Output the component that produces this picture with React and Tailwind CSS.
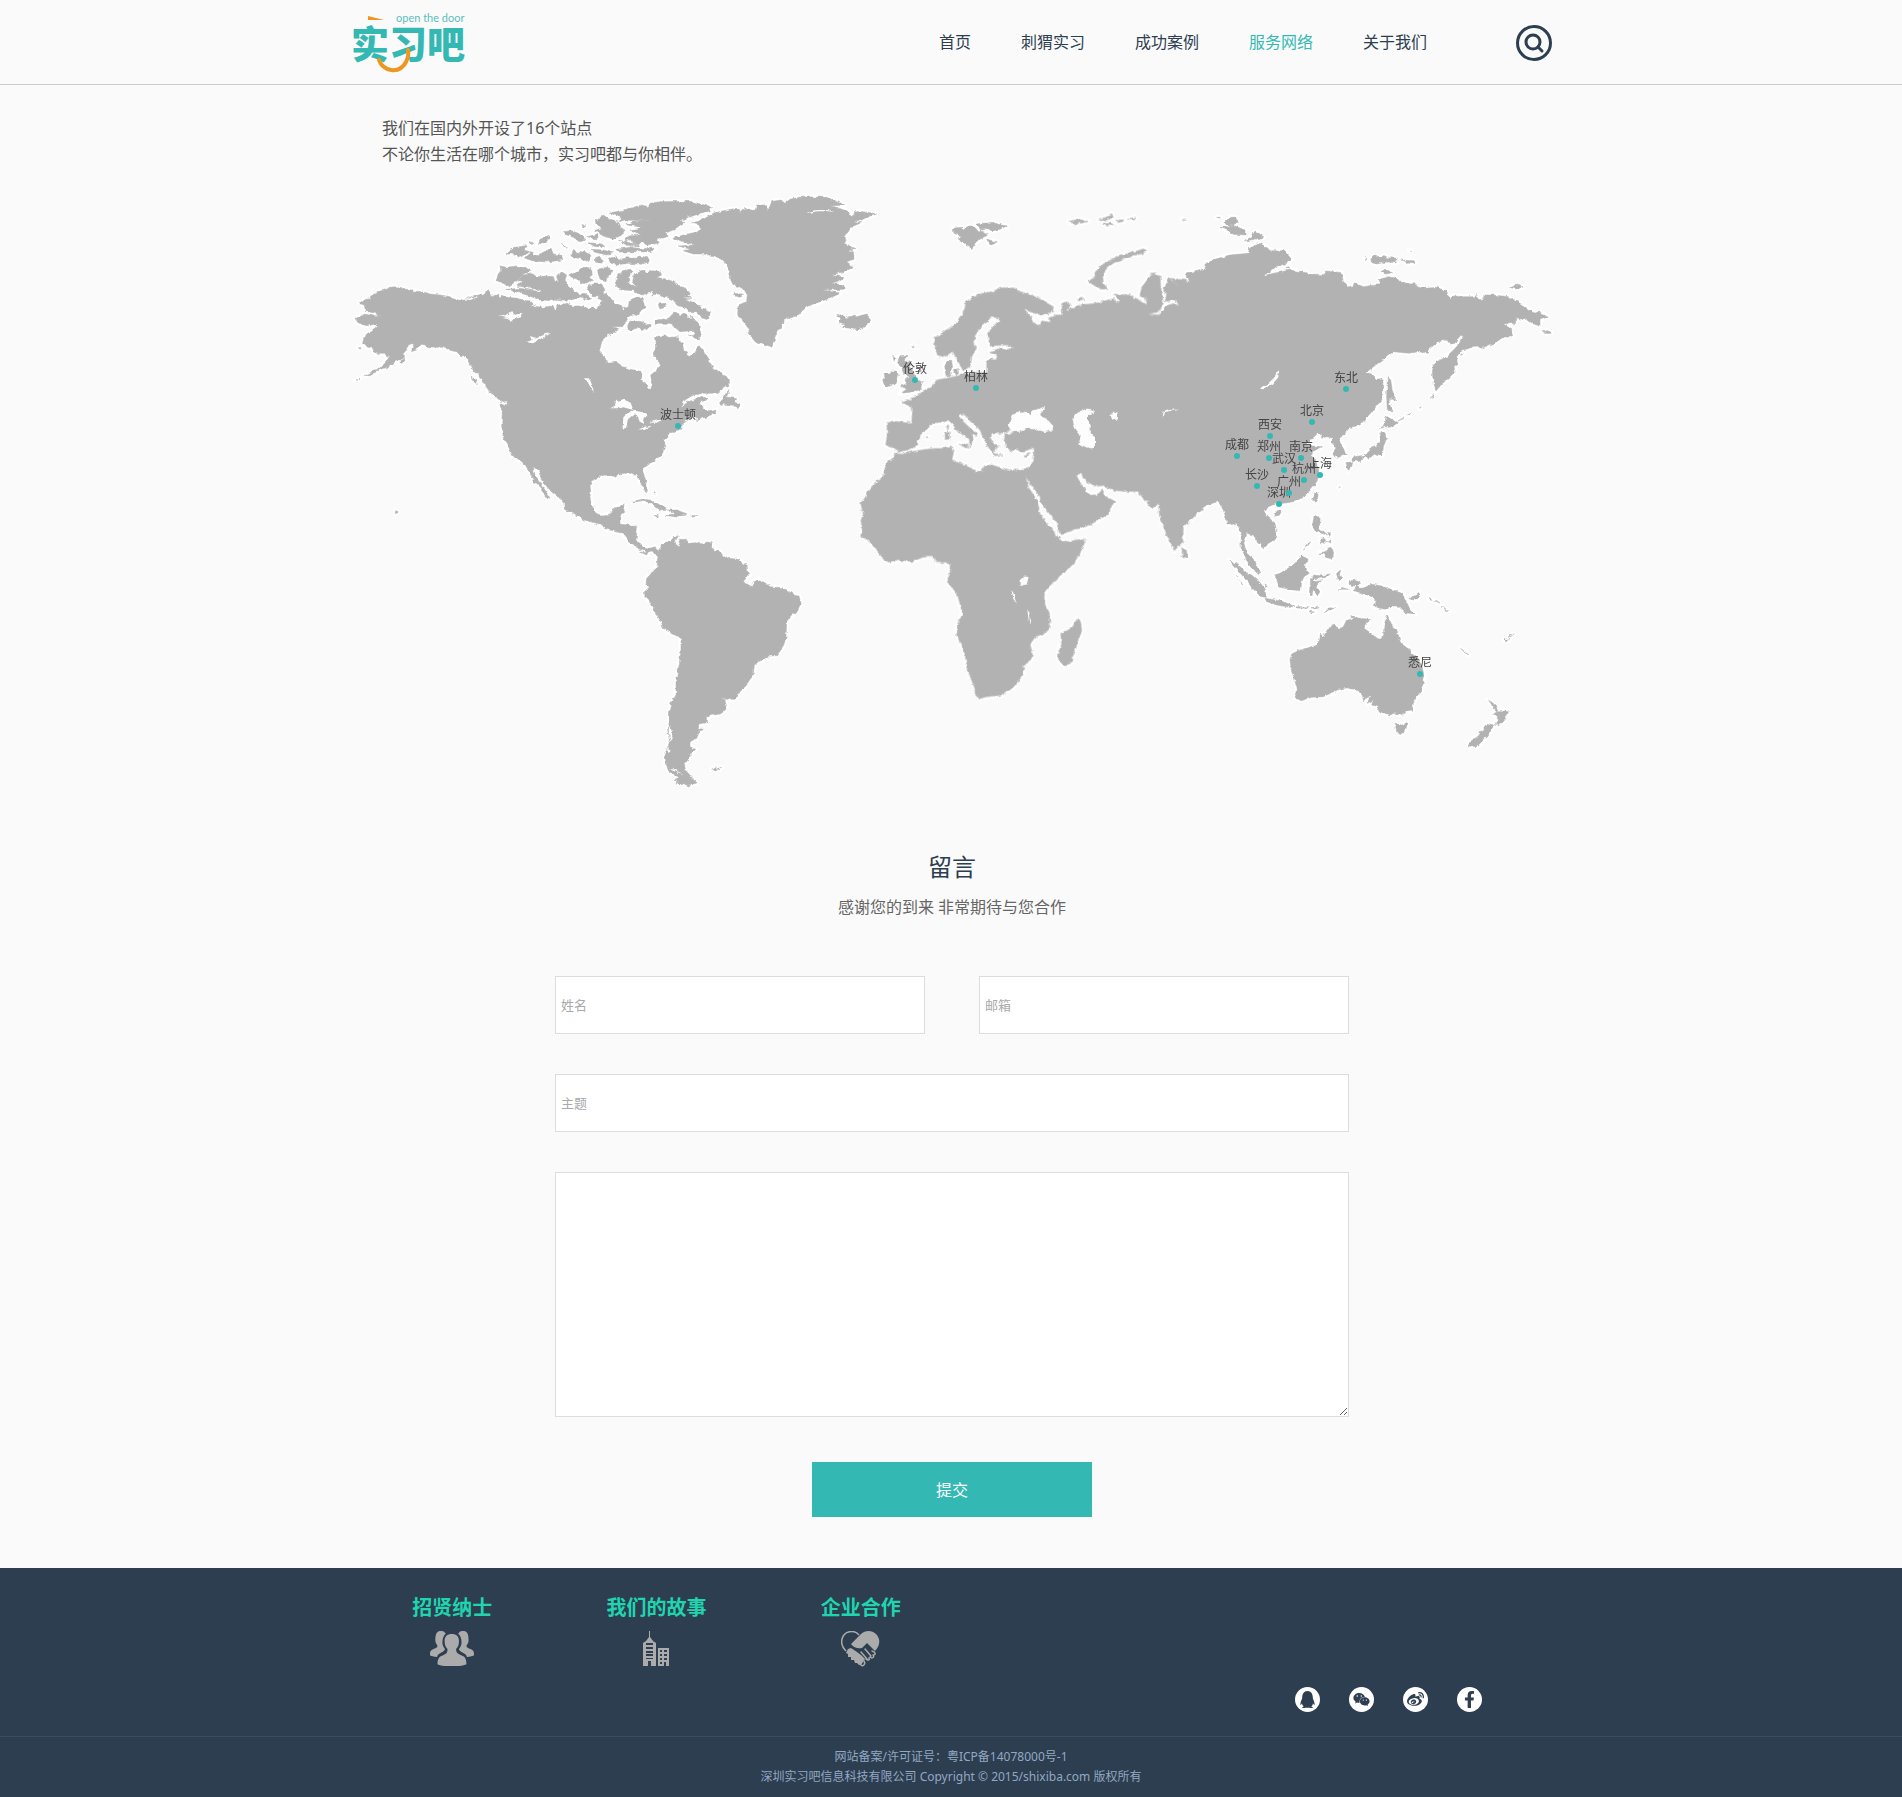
import { FaQq, FaWeixin, FaWeibo, FaFacebookF } from "react-icons/fa";

const NAV = [
  { label: "首页" },
  { label: "刺猬实习" },
  { label: "成功案例" },
  { label: "服务网络", active: true },
  { label: "关于我们" },
];

const MAP = { x: 352, y: 187, width: 1200, height: 610 };

const CITIES = [
  { name: "波士顿", x: 678, y: 426 },
  { name: "伦敦", x: 915, y: 380 },
  { name: "柏林", x: 976, y: 388 },
  { name: "东北", x: 1346, y: 389 },
  { name: "北京", x: 1312, y: 422 },
  { name: "西安", x: 1270, y: 436 },
  { name: "成都", x: 1237, y: 456 },
  { name: "郑州", x: 1269, y: 458 },
  { name: "南京", x: 1301, y: 458 },
  { name: "武汉", x: 1284, y: 470 },
  { name: "杭州", x: 1304, y: 480 },
  { name: "上海", x: 1320, y: 475 },
  { name: "长沙", x: 1257, y: 486 },
  { name: "深圳", x: 1279, y: 504 },
  { name: "广州", x: 1289, y: 493 },
  { name: "悉尼", x: 1420, y: 674 },
];

/* Each region is drawn on its own grid and placed on the map by a transform. */
const REGIONS = [
  {
    id: "north-america",
    transform: "translate(340 180) scale(0.33333)",
    land: [
      "M45 415L75 402 100 408 120 405 100 398 80 395 75 382 72 375 58 370 75 360 90 355 98 343 110 337 130 330 150 322 165 320 175 326 200 325 210 332 245 335 270 342 300 345 330 350 345 358 365 362 385 353 400 348 430 342 445 332 455 350 475 342 478 354 485 346 500 352 530 355 560 362 570 362 590 372 572 378 610 382 640 378 645 392 652 388 650 376 680 370 700 378 720 378 745 385 760 380 768 386 775 380 785 365 775 352 780 345 790 340 810 352 825 370 840 375 850 388 865 380 868 362 885 352 905 352 912 372 915 385 900 395 890 410 880 405 860 410 862 418 850 440 815 440 840 448 805 465 785 485 778 515 795 530 800 550 830 547 850 560 870 568 903 574 905 600 920 612 925 625 932 630 936 615 932 585 945 575 958 560 958 545 940 525 950 505 947 475 955 468 975 468 990 472 1012 470 1015 478 1030 490 1035 515 1050 530 1065 518 1075 500 1080 498 1090 510 1095 525 1103 530 1110 545 1115 560 1130 572 1140 578 1160 590 1168 598 1168 615 1150 625 1130 640 1090 640 1060 645 1035 660 1022 683 1045 665 1075 655 1090 652 1105 658 1085 662 1078 672 1090 680 1088 690 1110 695 1130 690 1125 700 1100 710 1085 716 1070 722 1072 710 1060 712 1040 722 1025 735 1022 748 990 758 985 768 972 780 975 792 968 820 960 828 940 845 925 852 912 862 908 880 920 905 922 935 915 932 900 905 893 885 880 885 870 880 855 880 832 882 828 892 810 885 785 886 755 902 750 915 752 935 750 950 755 980 768 1000 790 1008 815 1000 822 980 855 975 850 995 840 1010 840 1032 860 1035 885 1036 892 1045 888 1080 895 1090 915 1102 930 1105 945 1100 955 1110 950 1130 935 1110 920 1117 915 1112 890 1105 880 1092 868 1090 868 1085 850 1062 820 1052 800 1048 780 1033 770 1030 735 1020 680 990 672 985 672 970 650 945 625 925 605 900 595 870 580 865 585 885 600 905 612 925 620 938 630 955 620 952 605 935 605 925 590 910 578 905 582 898 575 890 565 870 550 845 520 830 505 800 490 775 485 740 487 690 478 675 485 672 500 680 498 665 470 650 445 630 430 605 418 592 415 580 405 578 395 560 385 545 378 530 365 530 350 515 330 510 310 502 290 502 262 500 245 492 235 505 215 512 222 490 205 495 200 510 190 520 190 535 165 545 150 558 120 570 95 583 75 587 100 573 110 572 135 550 150 527 140 530 135 520 105 520 98 505 78 500 68 488 75 465 95 455 112 440 110 432 80 437 55 430Z",
      "M480 258L500 262 530 258 560 265 572 272 555 282 540 290 520 310 505 318 485 308 468 302 475 285 482 270Z",
      "M530 300L545 288 575 280 590 290 615 288 640 290 645 305 655 305 650 290 665 275 680 285 675 300 690 325 715 340 740 350 715 352 690 362 650 358 640 362 600 360 560 345 500 328 540 325 600 335 608 332 560 322 530 318 550 308Z",
      "M685 288L720 270 730 262 755 264 756 280 750 290 758 300 740 312 725 308 712 298Z",
      "M772 268L800 262 820 268 812 285 800 292 798 305 780 300Z",
      "M738 325L765 308 785 312 795 330 785 350 760 350Z",
      "M712 345L735 340 755 355 745 362Z",
      "M828 295L840 278 870 268 880 272 865 290 868 312 890 320 878 308 882 285 910 270 920 280 930 272 960 274 965 285 950 292 990 300 1020 320 1035 322 1050 345 1035 345 1055 355 1030 355 1070 370 1080 380 1112 395 1105 420 1090 415 1065 395 1045 395 1040 385 1010 375 1000 360 975 350 955 342 935 345 940 335 905 345 880 332 850 330 830 320Z",
      "M945 430L950 420 985 415 1005 395 1020 405 1035 400 1055 420 1050 405 1080 435 1082 450 1078 480 1060 470 1045 465 1065 462 1055 452 1020 455 990 430Z",
      "M862 440L870 420 905 425 932 438 918 450 890 445 870 452Z",
      "M955 372L975 370 975 382 960 387Z",
      "M820 412L850 418 845 424Z",
      "M785 440L820 444 810 450Z",
      "M805 235L830 230 835 240 860 233 890 235 900 228 925 234 928 245 905 253 860 250 835 255 810 250Z",
      "M765 235L780 232 790 240 785 250 768 246Z",
      "M555 235L575 215 585 228 600 222 632 205 640 222 665 225 668 240 620 246 580 243Z",
      "M498 222L525 202 540 200 560 196 550 210 570 215 550 228 532 234 530 222Z",
      "M595 190L600 178 630 168 622 182 605 192Z",
      "M570 185L582 188 575 194Z",
      "M670 155L695 152 715 160 730 165 735 182 720 185 700 172 675 163Z",
      "M725 137L738 138 732 142Z",
      "M695 225L700 212 718 218 730 212 750 220 748 240 735 245 722 236 700 232Z",
      "M668 190L680 205 668 196Z",
      "M740 170L770 163 775 172 765 180Z",
      "M745 188L785 192 795 200 765 200Z",
      "M755 208L790 210 820 218 800 225 770 218Z",
      "M765 125L790 105 808 118 830 122 838 140 855 150 845 165 820 178 790 168 762 152 785 145Z",
      "M808 100L840 92 870 85 905 75 925 80 930 70 960 65 1050 64 1115 80 1110 92 1060 105 1080 100 1020 122 1035 125 1000 150 975 160 985 168 950 180 955 190 920 195 905 185 895 195 880 190 870 178 850 185 865 168 900 165 870 150 910 142 860 135 880 125 940 120 900 122 850 120 835 125 842 112Z",
      "M835 180L870 188 900 198 860 196Z",
      "M830 208L880 200 900 206 945 205 930 215 840 216Z",
      "M1168 628L1160 650 1190 656 1185 666 1200 672 1198 685 1180 676 1140 672 1150 655Z",
      "M1095 690L1085 700 1100 695Z",
      "M878 965L905 958 930 960 955 972 980 988 960 990 945 978 930 968 905 963Z",
      "M985 990L1010 990 1042 1002 1015 1006 1010 1011 975 1006 1005 1002Z",
      "M942 1006L960 1008 952 1012Z",
      "M1055 1006L1072 1008 1060 1011Z",
      "M940 935L946 942 942 942Z",
      "M165 990L175 996 167 1002Z",
      "M445 635L470 640 498 665 490 668 465 650Z",
      "M178 545L195 535 198 542 185 550Z",
      "M48 600L60 594 54 600Z",
      "M55 503L63 503 60 508Z",
      "M393 588L408 600 412 614 400 605Z",
    ],
    water: [
      "M475 407L500 405 515 395 525 404 548 400 540 412 520 418 512 426 505 415 485 410Z",
      "M558 487L575 480 570 468 590 475 615 462 634 460 605 475 580 490Z",
      "M735 595L748 595 755 612 762 636 755 628 745 610Z",
      "M808 685L825 675 828 664 850 658 872 668 880 690 850 682 830 685Z",
      "M862 700L850 712 848 745 858 745 864 718 885 700 895 722 912 732 910 712 926 712 915 698 885 692Z",
      "M892 748L915 740 938 737 910 750Z",
      "M928 728L950 720 965 720 950 728Z",
      "M365 358L420 350 390 360Z",
      "M570 362L600 370 660 362 660 368 610 376 590 376Z",
    ],
  },
  {
    id: "greenland",
    transform: "translate(640 180) scale(0.33333)",
    land: [
      "M97 175L130 165 165 158 180 148 178 135 155 130 190 118 220 100 250 92 290 85 300 98 315 85 345 92 350 75 375 75 385 90 395 65 420 60 435 70 450 58 475 52 510 51 560 52 600 68 615 75 570 78 590 82 625 95 632 108 650 95 670 95 710 102 685 112 665 120 640 124 665 128 635 140 625 155 612 170 618 182 612 190 645 205 620 215 640 215 642 238 620 245 640 260 610 275 575 285 608 290 605 300 575 310 612 315 612 328 550 330 600 340 570 355 520 372 500 380 475 405 450 415 430 418 425 445 412 450 405 475 395 503 375 492 345 485 330 465 325 445 310 425 293 405 295 375 320 365 322 345 310 325 280 315 272 300 268 270 255 245 225 228 190 222 160 222 130 212 150 208 115 198 165 195Z",
      "M280 340L308 342 300 352 284 348Z",
      "M590 408L610 402 618 418 625 410 640 408 650 410 680 402 685 412 692 420 680 438 650 450 625 444 608 443 612 432 595 425 605 418Z",
      "M940 145L965 142 970 150 985 138 1000 138 1008 150 1030 155 1045 165 1030 172 1020 178 1005 190 995 210 988 198 975 192 970 186 955 178 962 168 942 160Z",
      "M1010 132L1060 127 1070 132 1100 138 1080 148 1060 152 1040 148 1025 150Z",
      "M1040 178L1072 186 1050 194Z",
      "M728 600L735 590 732 582 750 582 755 574 770 573 775 590 768 608 750 618 735 622Z",
      "M778 527L800 526 795 545 812 542 808 560 820 575 826 592 832 600 848 605 842 622 845 628 820 635 780 641 800 628 782 620 800 610 795 600 808 590 790 580 785 562 773 552Z",
      "M760 530L768 533 762 545Z",
      "M815 497L820 497 818 500Z",
      "M914 555L935 540 938 560 930 575 932 590 918 590Z",
      "M940 572L955 565 955 582 945 585Z",
      "M960 582L968 582 966 590Z",
    ],
    water: ["M500 97L530 90 560 90 585 95 560 94 530 94 510 99Z"],
  },
  {
    id: "europe-africa",
    transform: "translate(840 180) scale(0.33333 0.35714)",
    land: [
      "M283 440L300 436 310 425 345 405 355 390 370 370 378 350 372 345 400 325 420 320 440 315 462 312 480 300 495 305 520 302 540 312 558 318 590 328 640 355 638 368 620 375 600 378 575 370 550 362 575 385 582 400 600 410 605 395 630 398 632 392 622 388 650 378 668 378 665 345 675 342 692 350 680 365 700 358 720 350 770 345 820 332 830 345 838 335 820 320 870 322 905 340 922 350 918 335 900 325 905 300 935 265 960 268 962 300 970 345 958 368 925 375 955 378 985 350 1005 346 1018 358 1008 335 975 340 980 320 970 310 975 300 985 275 1020 300 990 275 1030 280 1055 288 1040 275 1040 262 1095 252 1100 230L1100 908 1060 945 1030 970 1028 1015 1020 1020 1003 1038 985 1005 975 980 960 950 958 935 955 905 940 917 920 905 930 900 915 900 905 885 890 872 850 872 820 868 800 862 790 855 770 858 740 845 722 822 708 825 715 838 725 855 745 882 770 882 788 868 795 885 825 900 815 912 805 935 770 955 745 968 700 980 660 993 650 960 625 930 610 910 590 875 570 850 552 822 562 812 570 808 575 800 583 755 575 752 545 762 530 754 515 760 500 748 492 730 495 712 520 708 515 700 490 708 455 712 452 725 470 745 480 745 465 752 462 768 450 755 440 742 430 722 420 700 390 675 375 655 358 655 360 668 385 690 410 712 410 718 395 712 400 730 390 748 388 725 350 700 335 680 325 672 310 678 280 680 262 695 240 715 230 730 235 740 215 752 180 762 165 752 142 745 137 740 142 715 140 680 160 675 200 680 215 678 218 640 205 632 185 622 200 615 215 618 215 608 235 603 250 590 275 580 290 560 320 555 345 550 380 542 400 538 440 540 440 510 450 500 470 505 465 485 450 480 480 472 500 475 525 468 495 462 450 465 442 430 470 400 482 395 475 385 450 385 445 395 430 405 405 435 400 455 410 470 395 495 392 520 370 535 350 500 338 480 325 488 310 495 292 490 285 465Z",
      "M165 765L185 768 210 762 250 755 280 752 300 752 335 748 342 758 335 782 355 792 380 798 405 815 420 818 435 800 450 798 480 805 510 812 530 812 550 810 578 800L555 824 565 860 590 895 600 935 625 965 655 1000 668 1015 700 1010 735 1003 735 1015 720 1045 700 1075 660 1108 620 1145 612 1165 615 1190 628 1212 630 1250 615 1268 585 1280 570 1300 577 1325 573 1345 550 1360 550 1380 540 1395 520 1420 485 1443 440 1447 420 1452 405 1442 405 1425 380 1365 375 1325 350 1275 352 1245 368 1215 358 1180 352 1160 335 1140 322 1125 330 1100 330 1080 322 1070 290 1072 285 1060 270 1055 250 1056 215 1068 180 1065 150 1072 130 1062 110 1035 80 1005 65 998 67 970 62 955 70 935 62 905 75 890 85 870 105 848 130 830 138 795 160 780Z",
      "M712 1228L722 1240 725 1262 715 1285 705 1320 690 1355 670 1358 656 1345 655 1325 665 1300 662 1270 695 1255Z",
      "M745 285L765 270 765 258 790 235 830 215 860 208 910 193 922 198 900 208 870 212 825 230 800 245 788 270 790 290 805 306 780 305Z",
      "M685 117L715 110 745 116 710 123Z",
      "M775 110L800 104 815 94 820 105 800 112Z",
      "M790 122L815 121 820 126 798 129Z",
      "M828 115L845 111 853 115 835 119Z",
      "M862 110L888 104 880 112Z",
      "M1025 109L1036 110 1028 112Z",
      "M712 332L725 328 732 333 715 338Z",
      "M930 262L945 260 945 266Z",
      "M355 738L385 740 380 752Z",
      "M315 708L328 706 328 726 316 726Z",
      "M320 688L326 686 325 702 318 698Z",
      "M460 766L488 770 465 772Z",
      "M550 772L572 765 562 774Z",
      "M258 720L264 719 262 724Z",
      "M1025 1025L1042 1042 1045 1055 1028 1058Z",
    ],
    water: [
      "M505 690L515 662 530 650 540 645 545 652 560 648 568 658 580 645 615 635 612 645 600 655 620 670 640 685 638 700 615 706 590 698 560 697 540 705 515 703Z",
      "M697 668L712 652 740 640 760 642 762 655 745 658 742 670 752 690 752 710 765 720 765 750 740 752 715 740 722 715 705 695Z",
      "M812 655L820 652 832 650 834 670 822 672 815 670Z",
      "M968 660L972 645 990 641 1022 645 990 646 975 650 972 661Z",
      "M542 1120L555 1110 566 1112 560 1132 542 1137Z",
      "M514 1148L520 1155 530 1188 522 1178Z",
      "M562 1205L568 1210 568 1230 573 1245 567 1238Z",
      "M405 505L418 498 415 512Z",
    ],
  },
  {
    id: "asia-east",
    transform: "translate(1180 180) scale(0.33333)",
    land: [
      "M0 300L35 310 20 295 20 278 50 275 75 270 80 250 105 238 150 225 205 220 208 205 240 190 262 203 270 212 315 212 335 235 320 250 290 262 250 288 280 280 330 270 380 278 390 285 430 287 440 273 485 278 490 305 515 325 525 310 550 320 585 315 600 315 598 298 625 290 650 295 665 310 700 308 715 322 740 325 770 322 800 332 803 346 815 358 818 348 850 350 885 350 888 343 905 362 912 345 940 345 985 350 1020 370 1055 395 1062 400 1078 396 1105 410 1080 420 1080 438 1060 432 1040 418 1020 420 1010 412 1005 430 970 432 990 445 998 468 975 468 950 485 905 505 890 498 870 505 845 510 830 530 832 552 822 560 825 575 800 600 785 612 768 633 760 600 757 580 760 555 770 545 800 530 830 500 850 468 838 470 825 490 810 492 800 480 775 485 750 505 745 520 715 515 690 520 640 515 600 545 555 580 575 585 590 598 605 595 612 610 605 660 580 690 540 735 500 745 495 762 475 775 490 805 498 825 470 835 460 820 468 800 452 790 460 775 440 770 425 775 418 762 390 785 370 785 395 798 425 800 400 812 395 825 408 845 415 865 418 890 410 905 395 925 375 950 340 965 300 972 290 970 265 980 255 995 258 1005 285 1030 290 1055 285 1080 265 1090 250 1107 245 1095 235 1088 220 1065 200 1060 192 1090 200 1120 225 1145 238 1180 215 1165 200 1140 182 1100 185 1065 170 1030 145 1035 130 990 115 965 95 970 70 980 40 1010 10 1038 0 1045Z",
      "M130 130L150 112 168 112 175 125 155 138Z",
      "M120 142L165 138 195 150 195 165 160 163 145 152Z",
      "M193 183L215 170 225 153 240 162 252 172 225 178Z",
      "M110 112L122 112 116 114Z",
      "M318 262L330 260 325 266Z",
      "M572 238L585 225 600 232 610 226 625 233 652 235 648 248 620 246 590 252 576 248Z",
      "M663 240L700 242 708 247 690 251Z",
      "M603 274L620 271 638 279 615 282Z",
      "M556 233L561 236 558 240Z",
      "M687 212L695 211 690 214Z",
      "M992 323L1008 315 1030 321 1010 327Z",
      "M1088 455L1103 452 1116 458 1100 461Z",
      "M842 523L850 520 845 526Z",
      "M622 590L632 600 637 630 647 662 632 655 628 670 636 692 622 692 620 650Z",
      "M618 708L635 718 655 728 630 742 615 740 602 745 615 730Z",
      "M603 755L612 755 620 775 610 800 606 828 580 825 565 838 560 825 540 838 515 842 520 830 555 825 572 810 575 800 595 795Z",
      "M497 848L515 845 512 862 505 872Z",
      "M530 838L550 836 540 845Z",
      "M655 722L672 712 670 716Z",
      "M680 706L694 700 690 704Z",
      "M718 686L724 683 720 688Z",
      "M750 655L764 642 760 648Z",
    ],
    water: [
      "M238 625L265 610 285 590 290 574 296 570 295 592 278 612 255 625Z",
      "M412 762L390 782 400 785 425 772 420 762Z",
    ],
  },
  {
    id: "oceania",
    transform: "translate(1180 360) scale(0.33333)",
    land: [
      "M408 398L415 400 412 415 405 428 398 418Z",
      "M283 460L290 452 305 452 298 466 288 468Z",
      "M402 470L420 470 420 490 415 508 430 515 440 525 425 520 405 512 397 498Z",
      "M443 518L453 522 447 530Z",
      "M420 535L430 532 440 545 425 552Z",
      "M442 545L452 540 452 550Z",
      "M416 580L435 575 442 570 455 560 461 580 455 598 440 592 432 582Z",
      "M370 570L385 550 392 546 380 562Z",
      "M285 645L300 640 320 628 345 610 365 586 388 600 375 612 375 625 388 640 372 650 365 665 362 692 340 690 318 685 298 682Z",
      "M148 600L172 612 200 638 215 645 238 665 256 688 256 712 240 708 215 682 190 650Z",
      "M192 560L200 580 225 602 230 625 240 640 222 632 205 612 195 590Z",
      "M255 715L300 722 345 738 330 742 290 735 260 725Z",
      "M350 740L385 740 382 745 352 744Z",
      "M392 742L418 743 405 747Z",
      "M388 753L404 756 398 758Z",
      "M432 757L445 745 468 740 450 752Z",
      "M392 655L405 645 425 648 448 641 435 653 402 656 402 665 425 662 408 678 422 698 412 708 400 688 396 708 388 700Z",
      "M470 640L482 630 478 645 485 652 475 662Z",
      "M478 688L505 688 490 684Z",
      "M505 662L530 660 542 670 530 675 542 685 555 683 575 672 605 678 640 690 665 700 678 722 690 748 705 762 675 758 655 738 635 738 620 748 600 745 580 738 592 725 575 710 548 700 520 692 530 680 508 672Z",
      "M683 712L700 712 718 700 715 714 700 720Z",
      "M745 710L757 722 750 720Z",
      "M765 722L778 730 772 728Z",
      "M785 735L806 756 798 752Z",
      "M622 765L630 782 638 800 650 808 655 825 662 850 690 870 700 885 712 892 725 915 733 950 725 990 710 1010 700 1030 697 1053 680 1055 662 1065 645 1060 630 1065 600 1055 590 1040 575 1035 580 1020 562 1030 572 1005 550 1022 548 1008 535 992 500 983 480 988 460 995 430 1010 395 1012 365 1022 345 1015 352 990 345 960 335 935 330 900 335 882 360 870 410 855 418 840 422 822 430 832 440 812 450 800 465 795 475 808 490 800 500 780 518 776 512 770 540 775 568 778 552 805 580 825 600 836 610 825 612 795Z",
      "M645 1090L665 1095 681 1090 678 1110 660 1124 650 1112Z",
      "M926 1018L945 1035 955 1052 970 1052 985 1055 980 1070 965 1088 955 1098 945 1092 955 1075 940 1062 952 1055 938 1040Z",
      "M920 1090L942 1095 925 1125 905 1145 890 1160 865 1158 870 1145 895 1128Z",
      "M842 865L867 885 855 878Z",
      "M972 838L990 836 980 843Z",
      "M985 830L1002 822 992 830Z",
      "M475 383L480 380 477 385Z",
      "M252 672L262 678 256 684Z",
      "M168 642L174 650 170 648Z",
      "M182 665L190 672 185 670Z",
    ],
    water: [],
  },
  {
    id: "south-america",
    transform: "translate(600 500) scale(0.33333)",
    land: [
      "M120 155L140 158 142 148 160 142 172 158 180 145 190 130 215 120 222 110 235 108 225 125 232 140 240 135 235 118 248 118 262 122 265 130 285 128 310 132 320 126 335 128 330 140 345 150 360 155 370 168 385 175 415 178 438 195 440 210 450 222 438 232 430 245 452 258 462 242 475 240 495 248 510 260 545 263 565 272 580 285 597 288 603 310 590 335 572 350 560 368 558 410 550 440 530 467 510 468 495 478 475 485 463 495 460 525 445 545 440 555 420 575 405 598 380 598 362 592 375 600 380 620 372 635 355 643 323 648 322 668 295 672 295 685 310 688 300 692 290 715 270 725 270 740 287 748 268 765 265 780 252 790 258 815 275 835 292 848 265 858 248 850 235 852 225 838 238 832 215 820 205 812 198 790 195 760 205 740 208 720 203 690 210 678 208 640 212 610 228 585 228 545 238 490 243 450 243 418 230 408 190 385 180 360 165 335 150 305 135 290 133 275 148 262 138 250 140 235 150 225 160 210 172 200 172 172 160 152 145 155 140 165 125 158Z",
      "M335 808L348 800 350 810Z",
      "M352 806L365 802 358 810Z",
    ],
    water: [
      "M438 234L446 230 440 240 432 246Z",
      "M452 256L462 244 466 246 455 260Z",
      "M210 680L218 700 212 730 208 712Z",
      "M200 745L212 752 206 760Z",
      "M205 800L235 815 250 822 225 815Z",
    ],
  },
];

function Land() {
  return REGIONS.map((r) => (
    <g key={r.id} transform={r.transform}>
      {r.land.map((d) => (
        <path key={d} d={d} />
      ))}
    </g>
  ));
}

function WorldMap() {
  return (
    <svg
      viewBox={`${MAP.x} ${MAP.y} ${MAP.width} ${MAP.height}`}
      className="block w-full overflow-visible"
      role="img"
      aria-label="世界地图"
    >
      <defs>
        <filter id="coast" x="-2%" y="-2%" width="104%" height="104%">
          <feTurbulence type="fractalNoise" baseFrequency="0.22" numOctaves="2" seed="4" result="n" />
          <feDisplacementMap
            in="SourceGraphic"
            in2="n"
            scale="4"
            xChannelSelector="R"
            yChannelSelector="G"
          />
        </filter>
      </defs>
      <g fill="#fff" stroke="#fff" strokeWidth="14" strokeLinejoin="round">
        <Land />
      </g>
      <g filter="url(#coast)">
        <g fill="#b2b2b2" stroke="#b2b2b2" strokeWidth="1.5">
          <Land />
        </g>
        <g fill="#fdfdfd">
          {REGIONS.map((r) => (
            <g key={r.id} transform={r.transform}>
              {r.water.map((d) => (
                <path key={d} d={d} />
              ))}
            </g>
          ))}
        </g>
      </g>
    </svg>
  );
}

function CityPin({ name, x, y }) {
  return (
    <li
      className="absolute flex h-[26px] w-10 -translate-x-1/2 flex-col items-center"
      style={{
        left: `${((x - MAP.x) / MAP.width) * 100}%`,
        top: `calc(${((y - MAP.y) / MAP.height) * 100}% - 20px)`,
      }}
    >
      <span className="whitespace-nowrap text-xs leading-[17px] text-[#444]">{name}</span>
      <span className="size-1.5 shrink-0 rounded-full bg-[#34b8b4]" />
    </li>
  );
}

function Logo() {
  return (
    <svg viewBox="1 -4 113 68" className="block h-[68px] w-[113px]" role="img" aria-label="实习吧">
      <path d="M17 4L33 8 17 8Z" fill="#ee9720" />
      <text x="45" y="10" fontSize="11" fontFamily="Lato, sans-serif" fill="#5cc0bd">
        open the door
      </text>
      <text
        x="0"
        y="46"
        fontSize="38"
        fontFamily="'Noto Sans CJK SC', sans-serif"
        fontWeight="900"
        fill="#34b8b4"
      >
        实习吧
      </text>
      <path
        d="M28 48C32 59 48 63 55 50C57 46 58 43 57 38"
        fill="none"
        stroke="#ee9720"
        strokeWidth="4"
        strokeLinecap="round"
      />
    </svg>
  );
}

function SearchIcon() {
  return (
    <svg viewBox="0 0 36 36" className="block size-9" fill="none" stroke="#2d3e50" aria-hidden="true">
      <circle cx="18" cy="18" r="16.5" strokeWidth="3" />
      <circle cx="17" cy="17" r="7" strokeWidth="3" />
      <path d="M22 22L26 26" strokeWidth="3" strokeLinecap="round" />
    </svg>
  );
}

function PeopleIcon() {
  return (
    <svg viewBox="0 0 44 35" className="block h-[35px] w-11" fill="#ababab" aria-hidden="true">
      <g transform="scale(0.35714 0.33333) translate(-140 -212)">
        <path d="M168 212C175 211 181 214 184 220C177 226 174 236 175 250C176 256 178 260 182 266C181 273 172 276 166 280C162 283 160 286 160 290C150 289 144 288 140 285C139 272 142 270 150 266C158 262 161 260 161 256C157 250 155 246 155 240C155 224 157 214 168 212Z" />
        <path d="M235 212C228 211 222 214 219 220C226 226 229 236 228 250C227 256 225 260 221 266C222 273 231 276 237 280C241 283 243 286 243 290C253 289 259 288 263 285C264 272 261 270 253 266C245 262 242 260 242 256C246 250 248 246 248 240C248 224 246 214 235 212Z" />
        <path d="M201 221C215 221 222 230 221 244C221 254 218 260 213 266C213 278 218 280 226 284C238 289 242 294 242 312C230 320 172 320 161 312C161 294 166 289 178 284C186 280 189 278 189 266C184 260 181 254 181 244C180 230 187 221 201 221Z" />
      </g>
    </svg>
  );
}

function BuildingIcon() {
  return (
    <svg viewBox="0 0 26 35" className="block h-[35px] w-[26px]" aria-hidden="true">
      <path
        fill="#ababab"
        fillRule="evenodd"
        d="M6 0H7V6L10 10L13 12V35H8V30H5V35H0V12L3 10L6 6ZM3 12V14H10V12ZM3 16V18H10V16ZM3 20V22H10V20ZM3 23V25H10V23ZM3 27V28H10V27ZM15 17H26V35H23V31H21V35H15ZM17 19V21H19V19ZM21 19V21H24V19ZM17 23V25H19V23ZM21 23V25H24V23ZM17 27V29H19V27ZM21 27V29H24V27ZM17 31V33H19V31Z"
      />
    </svg>
  );
}

function HandshakeIcon() {
  return (
    <svg viewBox="0 0 39 36" className="block h-9 w-[39px]" aria-hidden="true">
      <path
        d="M5 20C1 16 0 12 1 8C3 0 13 -2 18 4"
        fill="none"
        stroke="#ababab"
        strokeWidth="1.5"
      />
      <path
        fill="#ababab"
        d="M10 13L20 3C24 -1 31 -1 35 3C40 8 39 15 34 20L26 12L21 17C17 18 13 17 10 13Z"
      />
      <path
        fill="#ababab"
        d="M10 17L16 21L20 24L24 28L22 31L20 34L18 34L16 32L14 32L13 29L10 29L10 26L7 26L7 23L5 22L7 18Z"
      />
      <path
        d="M20 21L26 28M24 18L30 25M28 27C29 29 27 30 25 28M32 24C34 26 31 28 29 26M23 30C25 33 22 36 20 34M31 20C35 21 35 24 32 24"
        fill="none"
        stroke="#ababab"
        strokeWidth="1.5"
        strokeLinecap="round"
      />
    </svg>
  );
}

const FOOTER_LINKS = [
  { label: "招贤纳士", Icon: PeopleIcon },
  { label: "我们的故事", Icon: BuildingIcon },
  { label: "企业合作", Icon: HandshakeIcon },
];

const SOCIAL = [
  { label: "QQ", Icon: FaQq },
  { label: "微信", Icon: FaWeixin },
  { label: "微博", Icon: FaWeibo },
  { label: "Facebook", Icon: FaFacebookF },
];

const FIELD =
  "h-[58px] w-full min-w-0 border border-[#ddd] bg-white px-[5px] text-[13px] text-[#444] outline-none placeholder:text-[#a9a9a9]";

export default function App() {
  return (
    <div className="flex min-h-screen flex-col bg-[#fafafa] font-['Noto_Sans','Noto_Sans_CJK_SC',sans-serif] text-[#555]">
      <header className="border-b border-[#ccc] pl-0.5">
        <div className="mx-auto flex h-[84px] max-w-[1200px] items-center">
          <a href="#">
            <Logo />
          </a>
          <nav className="mr-[89px] ml-auto flex gap-[50px] text-base text-[#2d3e50]">
            {NAV.map((n) => (
              <a key={n.label} href="#" className={n.active ? "text-[#34b8b4]" : ""}>
                {n.label}
              </a>
            ))}
          </nav>
          <button type="button" aria-label="搜索" className="mt-0.5">
            <SearchIcon />
          </button>
        </div>
      </header>

      <main className="flex-1 pb-[49px] pl-0.5">
        <div className="mx-auto max-w-[1200px]">
          <p className="px-[30px] pt-[30px] pb-5 text-base leading-[26px]">
            我们在国内外开设了16个站点
            <br />
            不论你生活在哪个城市，实习吧都与你相伴。
          </p>
          <div className="relative">
            <WorldMap />
            <ul>
              {CITIES.map((c) => (
                <CityPin key={c.name} {...c} />
              ))}
            </ul>
          </div>
        </div>

        <section className="mx-auto w-full max-w-[794px] pt-[50px] text-center">
          <h2 className="text-2xl leading-10 text-[#2d3e50]">留言</h2>
          <p className="text-base leading-10 text-[#666]">感谢您的到来 非常期待与您合作</p>
          <form className="mt-[49px]" onSubmit={(e) => e.preventDefault()}>
            <div className="grid grid-cols-2 gap-x-[54px] gap-y-10">
              <input className={FIELD} type="text" aria-label="姓名" placeholder="姓名" />
              <input className={FIELD} type="email" aria-label="邮箱" placeholder="邮箱" />
              <input className={`${FIELD} col-span-2`} type="text" aria-label="主题" placeholder="主题" />
              <textarea
                className="col-span-2 block h-[245px] w-full border border-[#ddd] bg-white p-[5px] text-[13px] outline-none"
                aria-label="留言"
              />
            </div>
            <button
              type="submit"
              className="mt-[45px] h-[55px] w-[280px] bg-[#34b8b4] text-base text-white"
            >
              提交
            </button>
          </form>
        </section>
      </main>

      <footer className="bg-[#2d3e50]">
        <div className="mx-auto max-w-[1202px] pt-6 pb-6">
          <div className="flex">
            {FOOTER_LINKS.map(({ label, Icon }) => (
              <a key={label} href="#" className="flex w-[17%] flex-col items-center gap-2">
                <span className="text-xl leading-[31px] font-bold text-[#1fd4ae]">{label}</span>
                <Icon />
              </a>
            ))}
          </div>
          <div className="mt-5 flex justify-end gap-[29px] pr-[70px]">
            {SOCIAL.map(({ label, Icon }) => (
              <a
                key={label}
                href="#"
                aria-label={label}
                className="flex size-[25px] items-center justify-center rounded-full bg-white text-[#2d3e50]"
              >
                <Icon className="size-[17px]" />
              </a>
            ))}
          </div>
        </div>
        <div className="border-t border-[#3b4c5f] py-[10px] text-center text-xs leading-5 text-[#92a8c2]">
          <p>网站备案/许可证号：粤ICP备14078000号-1</p>
          <p>深圳实习吧信息科技有限公司 Copyright © 2015/shixiba.com 版权所有</p>
        </div>
      </footer>
    </div>
  );
}
